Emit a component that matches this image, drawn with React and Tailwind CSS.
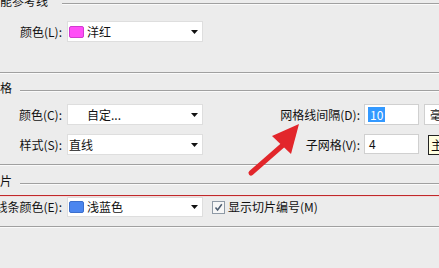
import React from "react";

function Header({ title, gap }) {
  return (
    <div className="flex h-[12px] ml-[-12px] shrink-0">
      <span className="whitespace-nowrap leading-[12px]">{title}</span>
      <div
        className={`flex-1 mt-[8px] h-[2px] border-t border-t-[#a0a0a0] border-b border-b-[#fafafa] ${gap}`}
      />
    </div>
  );
}

function Rule() {
  return <div className="h-[2px] border-t border-t-[#a0a0a0] border-b border-b-[#fafafa] shrink-0" />;
}

function Arrow() {
  return (
    <svg width="7" height="4" viewBox="0 0 7 4" className="ml-auto mr-[4px] shrink-0">
      <polygon points="0,0 7,0 3.5,4" fill="#111" />
    </svg>
  );
}

function Label({ children, w = "w-[62px]" }) {
  return (
    <div className={`${w} shrink-0 flex justify-end whitespace-nowrap`}>{children}</div>
  );
}

function Select({ swatch, text, pad }) {
  return (
    <div className="ml-[5px] w-[136px] h-full shrink-0 bg-white border border-[#dedede] flex items-center">
      {swatch ? (
        <>
          <div className={`ml-[1px] w-[15px] h-[12px] rounded-[2px] shrink-0 ${swatch}`} />
          <span className="ml-[3px] whitespace-nowrap">{text}</span>
        </>
      ) : (
        <span className={`${pad} whitespace-nowrap`}>{text}</span>
      )}
      <Arrow />
    </div>
  );
}

export default function App() {
  return (
    <div className="relative w-[439px] h-[268px] overflow-hidden bg-[#ececec] text-[12px] leading-[12px] text-[#111] font-['Microsoft_YaHei','Noto_Sans_CJK_SC',sans-serif]">
      <div className="flex flex-col mt-[-5px]">
        {/* 智能参考线 */}
        <Header title="智能参考线" gap="ml-[14px]" />
        <div className="flex h-[21px] items-center mt-[14px]">
          <Label>颜色(L):</Label>
          <Select swatch="bg-[#ff4ef7] border border-[#d23ad0]" text="洋红" />
        </div>
        <div className="mt-[30px]">
          <Rule />
        </div>

        {/* 网格 */}
        <div className="mt-[8px]">
          <Header title="网格" gap="ml-[8px]" />
        </div>
        <div className="flex h-[21px] items-center mt-[10px]">
          <Label>颜色(C):</Label>
          <Select text="自定..." pad="pl-[19px]" />
          <Label w="w-[157px]">网格线间隔(D):</Label>
          <div className="ml-[4px] w-[55px] h-full shrink-0 bg-white border border-[#d0d0d0] flex items-center">
            <span className="ml-[3px] bg-[#3399ff] text-white px-[2px] h-[15px] flex items-center">10</span>
          </div>
          <div className="ml-[5px] w-[60px] h-full shrink-0 bg-white border border-[#d0d0d0] flex items-center">
            <span className="ml-[5px] whitespace-nowrap">毫米</span>
          </div>
        </div>
        <div className="flex h-[21px] items-center mt-[9px]">
          <Label>样式(S):</Label>
          <Select text="直线" pad="pl-[1px]" />
          <Label w="w-[157px]">子网格(V):</Label>
          <div className="ml-[4px] w-[55px] h-[20px] self-start shrink-0 bg-white border border-[#d0d0d0] flex items-center">
            <span className="ml-[4px]">4</span>
          </div>
          <div className="ml-[9px] w-[60px] h-[20px] self-end shrink-0 bg-[#ffffe1] border border-[#222] flex items-center">
            <span className="ml-[2px] whitespace-nowrap">主网格</span>
          </div>
        </div>
        <div className="mt-[9px]">
          <Rule />
        </div>

        {/* 切片 */}
        <div className="mt-[9px]">
          <Header title="切片" gap="ml-[8px]" />
        </div>
        <div className="mt-[8px] h-[2px] border-t border-t-[#c0282a] border-b border-b-[#f2dada] shrink-0" />
        <div className="flex h-[20px] items-center">
          <Label>线条颜色(E):</Label>
          <Select swatch="bg-[#4b86ef] border border-[#3c6fcc]" text="浅蓝色" />
          <div className="ml-[9px] w-[13px] h-[13px] shrink-0 border border-[#8f9aa6] bg-[#f6f6f6] flex items-center justify-center">
            <svg width="9" height="9" viewBox="0 0 9 9">
              <path d="M1.5 4.5 L3.6 7 L7.8 1.3" fill="none" stroke="#4d5d70" strokeWidth="1.5" />
            </svg>
          </div>
          <span className="ml-[3px] whitespace-nowrap">显示切片编号(M)</span>
        </div>
        <div className="mt-[9px]">
          <Rule />
        </div>
      </div>

      {/* annotation arrow */}
      <svg className="absolute inset-0 pointer-events-none" width="439" height="268" viewBox="0 0 439 268">
        <line x1="251" y1="173" x2="283" y2="145" stroke="#e2262b" strokeWidth="5" strokeLinecap="round" />
        <polygon points="299,124 272,136 291,154" fill="#e2262b" />
      </svg>
    </div>
  );
}
